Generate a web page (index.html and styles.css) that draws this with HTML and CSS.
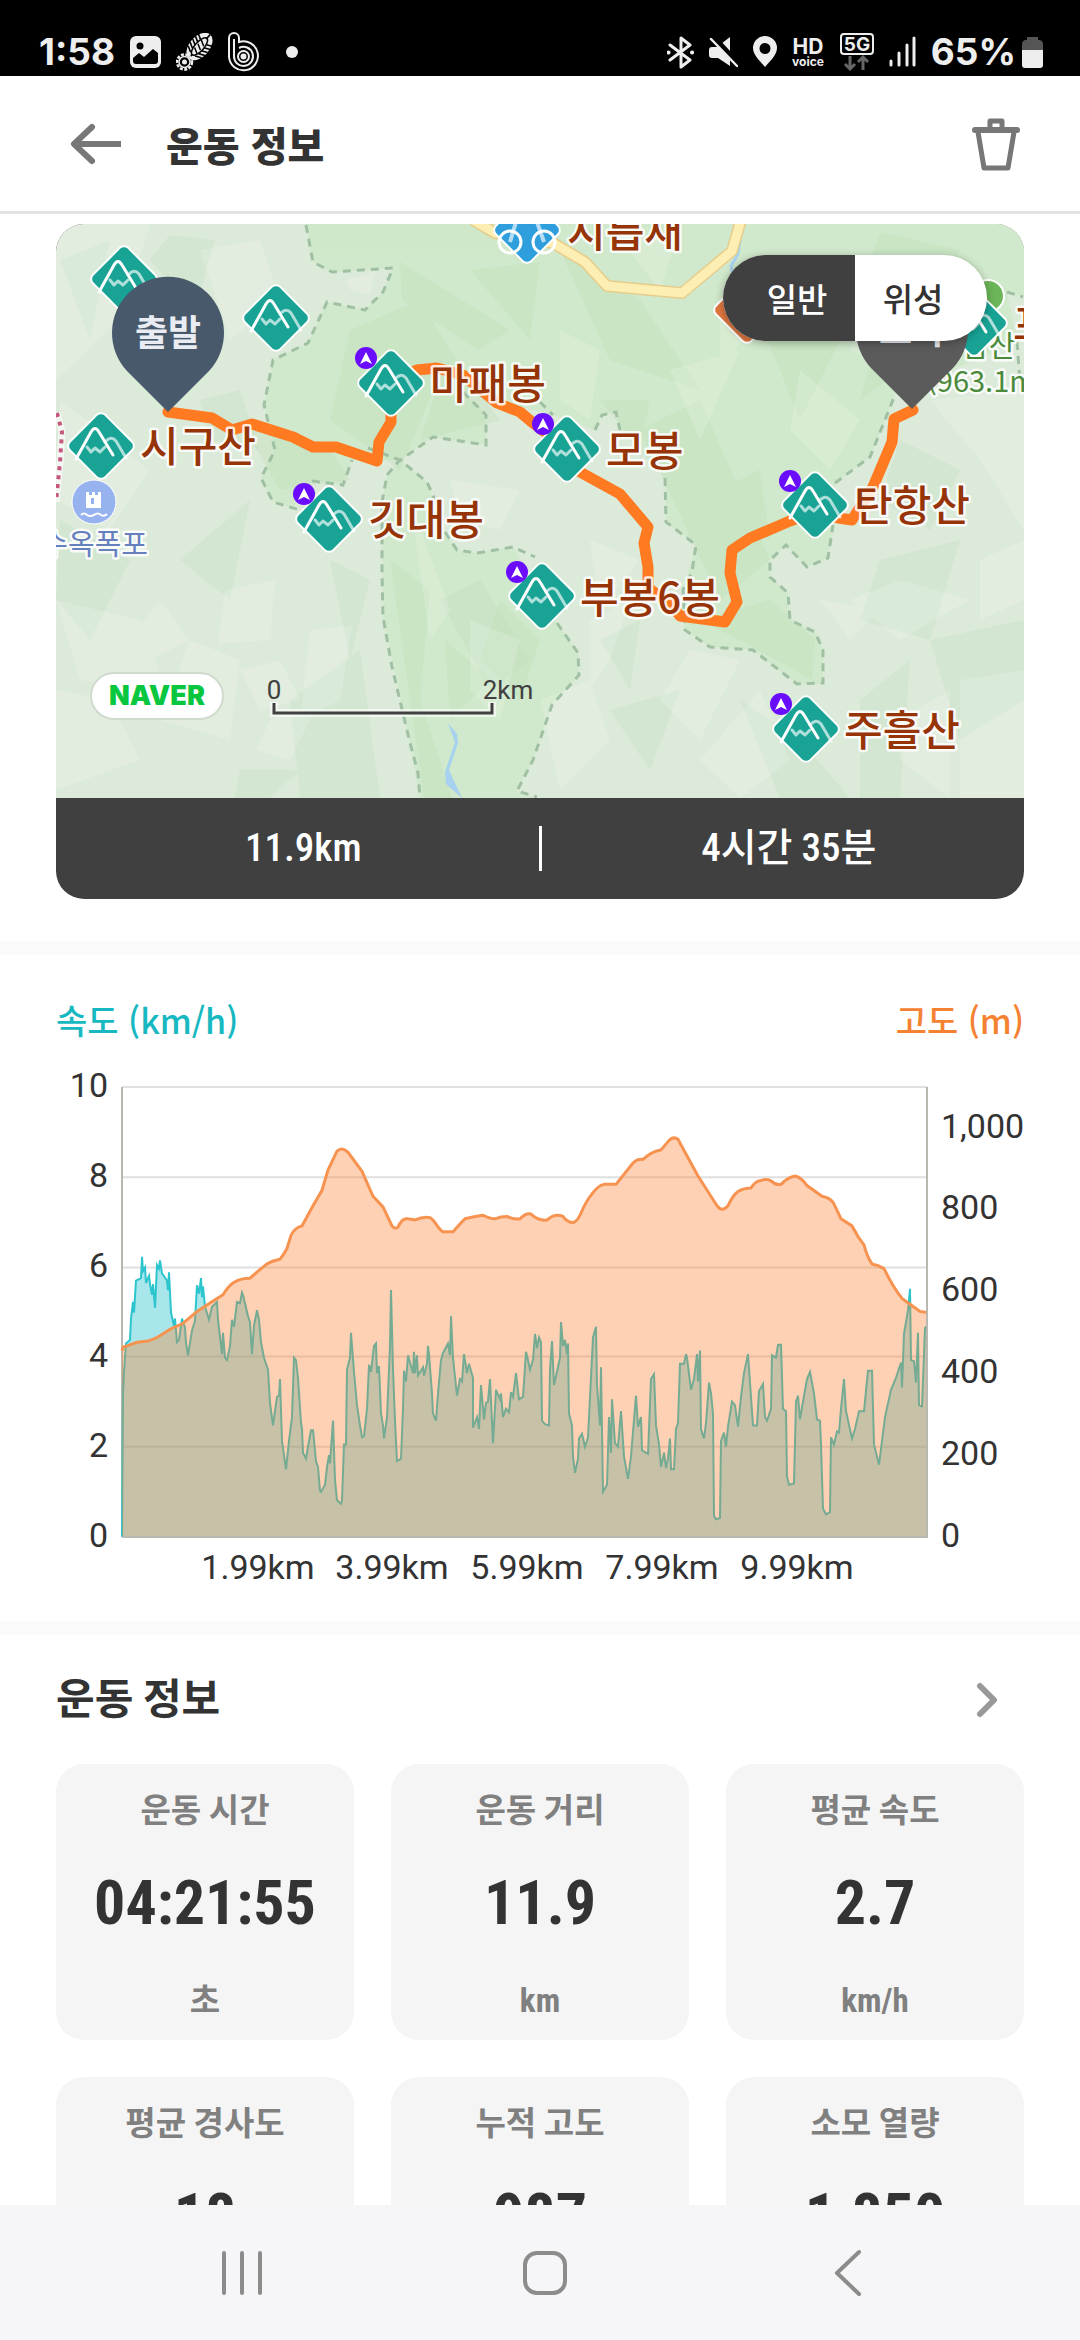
FILE: index.html
```html
<!DOCTYPE html>
<html lang="ko">
	<head>
		<meta charset="utf-8">
		<meta name="viewport" content="width=device-width, initial-scale=1">
		<title>운동 정보</title>
		<link rel="stylesheet" href="styles.css">
	</head>
	<body>
		<div class="statusbar">
			<div class="status-group">
				<span class="status-text">1:58</span>
				<svg width="31" height="32" viewBox="0 0 31 32">
					<rect width="31" height="32" rx="6" fill="#eee"/>
					<circle cx="10" cy="10" r="3.5" fill="#000"/>
					<path d="M3 22L9 17L14 21L23 13L28 17V25Q28 28 25 28H6Q3 28 3 25Z" fill="#000"/>
				</svg>
				<svg width="37" height="38" viewBox="0 0 37 38">
					<g transform="translate(23.500 13.500) rotate(42)">
						<ellipse rx="10" ry="16" fill="#eee"/>
						<path d="M-10 -9L-4 -6M-10 -5L-4 -2M-10 -1L-4 2M-10 3L-4 6M-9 7L-3 10M10 -9L4 -6M10 -5L4 -2M10 -1L4 2M10 3L4 6M9 7L3 10M0 -16V-10M0 16V11" stroke="#000" stroke-width="1.600"/>
						<ellipse rx="4.500" ry="11" fill="none" stroke="#000" stroke-width="1.500"/>
						<path d="M-3 -6L3 -3M-3 -1L3 2M-3 4L3 7" stroke="#000" stroke-width="1.500"/>
					</g>
					<circle cx="8.500" cy="29" r="7.500" fill="none" stroke="#eee" stroke-width="2.500" stroke-dasharray="3 1.500"/>
					<circle cx="8.500" cy="29" r="5.500" fill="none" stroke="#eee" stroke-width="1.500"/>
					<circle cx="8.500" cy="29" r="2.500" fill="#eee"/>
				</svg>
				<svg width="31" height="40" viewBox="0 0 31 40" fill="none" stroke="#eee" stroke-width="2">
					<path d="M1 25V6A5 5 0 0 1 11 6V10A14.500 14.500 0 1 1 1 25Z"/>
					<path d="M6 25V7M6 24A9.500 9.500 0 1 0 11 16" />
					<circle cx="15.500" cy="24.500" r="5.500"/>
					<circle cx="15.500" cy="24.500" r="2" fill="#eee"/>
				</svg>
				<span class="status-dot"></span>
			</div>
			<div class="status-group">
				<svg width="27" height="33" viewBox="0 0 27 33" fill="none" stroke="#eee" stroke-width="3" stroke-linecap="round" stroke-linejoin="round">
					<path d="M3 9L23 24L14 31V2L23 9L3 24"/>
					<path d="M1.500 16.500H1.600M25 16.500H25.100" stroke-width="4"/>
				</svg>
				<svg width="29" height="32" viewBox="0 0 29 32">
					<path d="M0 14Q0 11 3 11H8L21 1V30L9 22H3Q0 22 0 19Z" fill="#eee"/>
					<path d="M3 0L29 28" stroke="#000" stroke-width="6"/>
					<path d="M2 3L28 30" stroke="#eee" stroke-width="2.500" stroke-linecap="round"/>
				</svg>
				<svg width="24" height="32" viewBox="0 0 24 32">
					<path d="M12 0A12 12 0 0 1 24 12C24 19 17 25 12 31C7 25 0 19 0 12A12 12 0 0 1 12 0ZM12 7A5.500 5.500 0 1 0 12 18A5.500 5.500 0 1 0 12 7Z" fill="#eee" fill-rule="evenodd"/>
				</svg>
				<svg class="badge-text" width="33" height="32" viewBox="0 0 33 32">
					<text x="16" y="18" font-size="21">HD</text>
					<text x="16" y="30" font-size="12">voice</text>
				</svg>
				<svg class="badge-text" width="34" height="38" viewBox="0 0 34 38">
					<rect x="1" y="1" width="32" height="20" rx="3" fill="none" stroke="#eee" stroke-width="2"/>
					<text x="17" y="18" font-size="19">5G</text>
					<path d="M10 23V36M5 31L10 36L15 31M23 37V24M18 29L23 24L28 29" fill="none" stroke="#666" stroke-width="3"/>
				</svg>
				<svg width="27" height="32" viewBox="0 0 27 32" stroke="#eee" stroke-width="3" stroke-linecap="round">
					<path d="M2 25V29M10 17V29M18 9V29M25 2V29"/>
				</svg>
				<span class="battery">
					<span class="status-text">65%</span>
					<svg width="21" height="32" viewBox="0 0 21 32">
						<path d="M5 1H16V4H18Q21 5 21 8V15H0V8Q0 5 3 4H5Z" fill="#555"/>
						<path d="M0 14H21V29Q21 32 18 32H3Q0 32 0 29Z" fill="#eee"/>
					</svg>
				</span>
			</div>
		</div>

		<header class="appbar">
			<button class="icon-button" aria-label="뒤로">
				<svg width="52" height="42" viewBox="0 0 52 42" fill="none" stroke="#777" stroke-width="6">
					<path d="M22 4L4 21L22 38" stroke-linecap="round" stroke-linejoin="round"/>
					<path d="M4 21H51"/>
				</svg>
			</button>
			<h1 class="title">운동 정보</h1>
			<button class="icon-button" aria-label="삭제">
				<svg width="50" height="56" viewBox="0 0 50 56" fill="none" stroke="#777" stroke-width="5" stroke-linejoin="round">
					<path d="M4 14H46" stroke-width="6" stroke-linecap="round"/>
					<path d="M19 12V5H31V12"/>
					<path d="M7 16L13 52H37L43 16"/>
				</svg>
			</button>
		</header>

		<main class="content">
			<section class="section map-section">
				<div class="map-card">
					<div class="map">
						<svg class="map-canvas" viewBox="56 224 968 574">
							<defs>
								<g id="peak">
									<rect x="-25" y="-25" width="50" height="50" rx="6" transform="rotate(45)" fill="#18a395" stroke="#fff" stroke-width="2"/>
									<g fill="none" stroke="#fff" stroke-width="3" stroke-linecap="round" stroke-linejoin="round">
										<path d="M4 -4Q10 -11 15 -5L25 12M-14 1L-10 6L-6 2L-1 6L4 1" opacity=".65"/>
										<path d="M-25 13L-10 -14Q-6 -21 -2 -14L12 9"/>
									</g>
								</g>
								<g id="badge">
									<circle r="11" fill="#6a0dff"/>
									<path d="M0 -6L6 6L0 3L-6 6Z" fill="#fff"/>
								</g>
							</defs>
							<rect x="56" y="224" width="968" height="574" fill="#dcead9"/>

							<!-- park areas -->
							<path fill="#d0e8cb" d="M306 224L313 262L332 272L393 268L383 292L365 310L327 302L308 343L273 360L264 405L275 450L261 478L273 502L293 508L312 481L343 485L352 460L400 460L433 437L486 445L486 415L463 392L553 415L595 430L602 415L616 412L620 430L665 478L666 522L696 545L683 590L685 630L710 647L753 650L797 684H823V650L815 632L790 620L788 593L770 577V560L786 545L807 567L828 558L833 525L835 483L870 457L895 395L928 380L1017 342L1007 292L1024 297V224Z"/>
							<path fill="#d0e8cb" d="M400 460L427 482L445 532L457 550L477 553L513 547L557 623L578 653L579 675L552 705L533 760L517 791L537 798H420L410 743L383 617L382 502L387 475Z"/>

							<!-- relief shading -->
							<g fill="#b5dcae" opacity=".24">
								<path d="M400 262L510 330L478 350L402 300ZM350 330L420 300L450 350L400 470L330 420ZM560 250L640 300L700 390L610 360ZM640 430L700 400L770 560L720 600ZM880 232L960 250L935 300L870 262ZM700 620L770 600L815 640L812 680L740 640ZM390 560L430 590L420 700L452 798H424ZM500 600L540 640L520 700L480 660Z"/>
								<path d="M470 270L540 262L530 340ZM450 350L500 420L420 440ZM600 400L650 400L640 450ZM760 320L840 340L800 420ZM880 330L930 350L860 400ZM700 500L760 470L770 540ZM240 420L330 450L350 480L280 490ZM445 640L490 680L450 720Z"/>
							</g>
							<g fill="#bfdcc0" opacity=".28">
								<path d="M170 235L215 240L195 310L150 260ZM60 520L130 560L90 640L56 600ZM180 560L250 500L230 600ZM290 700L360 650L380 798H300ZM880 560L960 540L930 640L860 620ZM930 640L1024 620V700L960 740ZM740 700L800 740L850 798H780ZM600 640L640 620L630 690ZM900 440L960 470L930 530L880 500ZM240 770L300 770L270 798H235ZM60 260L110 240L90 340ZM440 600L480 580L530 660L490 690ZM330 560L370 580L350 660ZM610 710L680 690L650 770ZM200 400L240 390L260 450L210 440ZM860 700L910 660L900 798H860Z"/>
							</g>
							<g fill="#fff" opacity=".17">
								<path d="M56 224H150L120 320L56 380ZM200 250L260 240L280 300L230 340ZM60 400L150 470L110 530L56 500ZM56 600L140 620L170 700L80 680ZM225 590L275 580L270 640L218 644ZM190 640L240 660L230 740L160 720ZM270 720L320 700L290 760L256 750ZM310 630L352 626L340 700L300 720ZM56 690L110 700L140 760L56 790ZM120 650L160 600L190 640L150 660ZM240 670L280 660L300 700L260 710ZM345 280L375 272L370 295L350 290Z"/>
								<path d="M930 400L1024 390V530L980 460ZM900 580L970 600L900 640L850 600ZM960 680L1024 670V798H960ZM690 650L740 660L700 740L660 700ZM590 620L630 600L610 660L590 690ZM820 600L880 610L850 640ZM540 700L590 680L610 740L560 790ZM760 690L790 760L740 798L700 760ZM900 720L950 690L950 798L900 760ZM980 560L1024 540V600L980 620ZM590 540L640 560L600 610ZM450 480L520 490L500 530L460 520Z"/>
								<path d="M560 330L600 350L590 420L560 400ZM670 370L740 350L700 440ZM800 370L860 420L830 470L790 430ZM410 500L450 610L430 640ZM720 300L750 330L720 370ZM470 620L520 640L500 720L470 690ZM620 240L680 230L660 290ZM870 300L900 320L890 370L850 350Z"/>
							</g>

							<!-- park boundaries -->
							<path class="boundary" d="M306 225L313 262L332 272L393 268L383 292L365 310L327 302L308 343L273 360L264 405L275 450L261 478L273 502L300 510M312 481L343 485L352 460M368 448L400 460L427 482L435 500M463 392L486 415V445L433 437L398 462L387 475L382 502V573L383 617L392 667L410 743L418 773L420 798M445 532L457 550L477 553L513 547L535 557M557 623L578 653L579 675L552 705L533 760L517 791L537 797M540 402L553 415M595 430L602 415L616 412L620 430M665 478L666 522L696 545L692 572L683 590L685 630L710 647L753 650L797 684L823 683V650L815 632L790 620L788 593L770 577V560L786 545L807 567L828 558L833 525M835 483L870 457L895 395M1007 292L1023 297M1017 342L1020 382"/>
							<path d="M57 413L62 432L60 462L56 502" fill="none" stroke="#fff" stroke-width="7" opacity=".6"/>
							<path d="M57 413L62 432L60 462L56 502" fill="none" stroke="#c6577f" stroke-width="4" stroke-dasharray="4 5"/>

							<!-- rivers and road -->
							<path d="M448 723L457 734L458 743L449 770L462 798L446 784L445 772L455 742Z" fill="#a6d2f0"/>
							<path d="M740 240L738 254L731 266L734 278" fill="none" stroke="#a6d2f0" stroke-width="3"/>
							<g fill="none" stroke-linejoin="round">
								<path d="M473 220L495 233L553 243L585 262L607 286L682 293L732 251L741 220" stroke="#e6cd8b" stroke-width="12"/>
								<path d="M473 220L495 233L553 243L585 262L607 286L682 293L732 251L741 220" stroke="#fdeeb3" stroke-width="9"/>
							</g>

							<!-- recorded track -->
							<path d="M168 412L212 418L232 430L252 424L293 437L313 447H336L377 461L379 442L391 422V383L417 370L437 368L463 375L497 403L520 412L533 423L567 449L580 472L620 494L648 527L644 543L648 567V588L670 603L680 616L725 622L737 602L730 573L732 550L750 538L790 521L815 512L838 518L852 520L873 487L892 442L894 419L913 410" fill="none" stroke="#ff7a21" stroke-width="11" stroke-linecap="round" stroke-linejoin="round"/>

							<!-- places -->
							<circle cx="988" cy="296" r="16" fill="#6cb558" stroke="#fff" stroke-width="2"/>
							<g transform="translate(747 310)">
								<rect x="-25" y="-25" width="50" height="50" rx="6" transform="rotate(45)" fill="#e0763f" stroke="#fff" stroke-width="2"/>
							</g>
							<g transform="translate(527 230)" fill="none" stroke="#fff">
								<rect x="-25" y="-25" width="50" height="50" rx="6" transform="rotate(45)" fill="#2e9fdc" stroke-width="2"/>
								<circle cx="-17" cy="12" r="11" stroke-width="3"/>
								<circle cx="17" cy="12" r="11" stroke-width="3"/>
								<path d="M-17 12L-11 -8H10L17 12" stroke-width="4" opacity=".65"/>
							</g>
							<g class="park-name">
								<text x="962" y="357">남산</text>
								<text x="927" y="392">(963.1m)</text>
							</g>
							<use href="#peak" x="124" y="279"/>
							<use href="#peak" x="276" y="318"/>
							<use href="#peak" x="391" y="383"/>
							<use href="#peak" x="101" y="446"/>
							<use href="#peak" x="329" y="519"/>
							<use href="#peak" x="567" y="449"/>
							<use href="#peak" x="815" y="505"/>
							<use href="#peak" x="542" y="596"/>
							<use href="#peak" x="806" y="729"/>
							<use href="#peak" x="974" y="323"/>
							<use href="#badge" x="366" y="358"/>
							<use href="#badge" x="304" y="494"/>
							<use href="#badge" x="543" y="424"/>
							<use href="#badge" x="790" y="481"/>
							<use href="#badge" x="517" y="572"/>
							<use href="#badge" x="781" y="704"/>
							<g class="peak-name">
								<text x="567" y="247">지릅재</text>
								<text x="430" y="399">마패봉</text>
								<text x="140" y="462">시구산</text>
								<text x="368" y="535">깃대봉</text>
								<text x="606" y="466">모봉</text>
								<text x="854" y="521">탄항산</text>
								<text x="580" y="613">부봉6봉</text>
								<text x="844" y="746">주흘산</text>
								<text x="1013" y="340">포암산</text>
							</g>
							<circle cx="94" cy="502" r="22" fill="#96b3f0" stroke="#fff" stroke-width="1"/>
							<path d="M86 492H89V495H92V492H95V495H98V492H101V508H86ZM91 498V504H94V498Z" fill="#fff" fill-rule="evenodd"/>
							<path d="M81 515Q84 512 87 515Q90 517 94 515Q98 512 101 515Q104 517 107 514" fill="none" stroke="#fff" stroke-width="2"/>
							<text class="fall-name" x="148" y="555">수옥폭포</text>

							<!-- start and finish pins -->
							<path d="M168 412L127 371A56 56 0 1 1 209 371Z" fill="#47596b"/>
							<text class="pin-name" x="168" y="346">출발</text>
							<path d="M912 409L871 368A56 56 0 1 1 953 368Z" fill="#5b5b5b"/>
							<text class="pin-name" x="912" y="344">도착</text>

							<!-- scale bar -->
							<path d="M274 702V713H492V702" fill="none" stroke="#fff" stroke-opacity=".6" stroke-width="8"/>
							<path d="M274 703V713H492V703" fill="none" stroke="#404040" stroke-width="3"/>
							<text class="scale-text" x="274" y="699">0</text>
							<text class="scale-text" x="508" y="699">2km</text>
						</svg>
						<div class="map-type">
							<button class="map-type-button active" aria-pressed="true">일반</button>
							<button class="map-type-button" aria-pressed="false">위성</button>
						</div>
						<a class="naver" href="#">NAVER</a>
					</div>
					<div class="map-summary">
						<span class="summary-value">11.9km</span>
						<span class="summary-value">4시간 35분</span>
					</div>
				</div>
			</section>

			<section class="section chart-section">
				<div class="chart-head">
					<h2 class="chart-title speed">속도 (km/h)</h2>
					<h2 class="chart-title altitude">고도 (m)</h2>
				</div>
				<svg class="chart" viewBox="56 1050 968 540">
					<!-- plot area, stretched over the axes -->
					<svg class="plot" x="122" y="1087" width="805" height="450" viewBox="122 1072 805 379" preserveAspectRatio="none">
						<path class="grid" d="M122 1072H927M122 1148H927M122 1224H927M122 1299H927M122 1375H927"/>
						<path class="border" d="M122 1072V1451"/>
						<path class="speed-area" d="M122 1451L123 1330L124 1312L126 1288L130 1285L131 1267L133 1253L134 1262L136 1235L141 1233L142 1215L143 1227L145 1224L146 1237L149 1231L150 1238L152 1247L153 1238L155 1258L157 1222L159 1225L160 1218L162 1229L167 1235L168 1243L169 1228L171 1262L174 1273L175 1267L177 1287L179 1285L182 1267L185 1275L186 1287L188 1298L192 1277L195 1269L197 1239L199 1246L201 1233L202 1249L203 1240L205 1257L209 1268L212 1257L217 1253L218 1268L222 1297L223 1279L225 1300L227 1302L230 1290L232 1268L234 1274L237 1253L240 1254L242 1245L243 1247L248 1265L250 1270L252 1297L254 1273L257 1260L259 1268L261 1287L264 1300L268 1310L270 1338L273 1357L277 1333L279 1332L280 1318L282 1370L286 1394L289 1370L292 1350L294 1300L296 1302L298 1317L301 1355L302 1360L303 1380L306 1385L308 1375L311 1361H313L316 1387L318 1392L320 1412L321 1413L325 1407L327 1392L329 1382L330 1389L333 1353L335 1403L337 1420L341 1423L342 1420L344 1373H346L347 1310L350 1300L351 1279L354 1312L357 1340L360 1357L362 1367L364 1366L367 1343L369 1306L371 1312L374 1290L376 1288L377 1313L379 1307L381 1347L383 1357L384 1368L387 1350L390 1290L391 1243L393 1310L395 1353L397 1387L401 1385L403 1343L404 1311L406 1320L408 1298L411 1307L413 1313L414 1295L415 1313L417 1298L418 1315L423 1308L424 1315L427 1305L428 1290L429 1297L432 1330L433 1347L436 1353L438 1330L441 1302L443 1296L448 1288L450 1298L451 1265L453 1300L457 1332L460 1318L462 1320L464 1297L467 1313L469 1305L473 1317L473 1359L477 1350L479 1360L481 1323L484 1352L486 1338L488 1337L490 1318L493 1372L496 1327L500 1335L501 1330L503 1350L506 1343L509 1346L511 1329L513 1333L516 1313L519 1335L523 1333L526 1295L528 1302L530 1310L533 1302L535 1280L537 1292L539 1283L541 1287L542 1353L545 1356L549 1357L550 1310L552 1286L554 1323L558 1308L560 1300L561 1270L563 1290L565 1285L567 1297L568 1288L569 1347L572 1357L573 1383L575 1397L578 1385L579 1368L582 1364L585 1375L588 1367L591 1317L593 1283L596 1274L597 1323L600 1357L601 1308L603 1413L607 1407L609 1350L611 1380L612 1335L615 1372L618 1375L621 1345L624 1383L628 1402L631 1383L636 1332L638 1358L641 1350L642 1378L648 1381L651 1318L654 1314L656 1357L659 1373L661 1392L664 1380L666 1393L668 1385L670 1368L671 1394H674L676 1360L678 1355L680 1305H684L686 1297L687 1300L691 1327L694 1318L697 1297L698 1320L700 1294L701 1360L704 1368L706 1355L709 1321L711 1330L713 1347L714 1433L716 1436L720 1435L721 1370L724 1363L726 1375L728 1358L732 1337L735 1340L738 1358L741 1333L744 1313L748 1297L751 1333L753 1357H757L759 1328L763 1322L765 1350L767 1353L771 1343L772 1298L776 1300L778 1289H781L783 1343L786 1345L787 1400L789 1407L794 1406L796 1337L798 1332L800 1352L803 1337L807 1318L810 1312L814 1330L817 1352L820 1353L821 1373L823 1427L826 1432L830 1430L831 1367L834 1373L837 1362L839 1363L841 1343L844 1318L846 1345L852 1368L855 1360L859 1345H864L866 1328L868 1311H872L874 1373L879 1390L882 1370L885 1350L891 1327L896 1317L901 1304L902 1325L904 1280L908 1260L910 1242L911 1302L914 1303L916 1321L918 1279L919 1340L922 1341L925 1275L927 1273V1451"/>
						<path class="altitude-area" d="M122 1451V1292L127 1290L137 1287L148 1286L157 1283L170 1276L183 1271L197 1261L210 1254L223 1247Q228 1240 233 1237Q240 1233 250 1233Q258 1227 267 1221Q273 1218 280 1217Q284 1213 287 1208L291 1197Q294 1191 302 1189L313 1172L322 1159L328 1142L337 1126Q342 1122 348 1127L362 1143L373 1164L383 1173L392 1189Q395 1192 398 1190Q402 1182 408 1183L415 1184Q423 1181 430 1182C435 1184 437 1191 443 1194H453Q460 1187 465 1183Q474 1181 483 1180Q490 1183 495 1183Q501 1181 507 1181Q514 1184 520 1183Q526 1178 531 1179Q539 1185 547 1184Q555 1178 563 1181Q568 1187 574 1186Q578 1184 580 1180Q586 1168 592 1162Q598 1155 604 1154H616L633 1136Q638 1132 643 1133Q652 1126 661 1125L668 1118Q673 1113 678 1116L685 1127L698 1147L717 1172Q722 1178 728 1172Q733 1163 738 1160Q744 1157 751 1157Q756 1151 760 1151Q766 1149 771 1151Q776 1155 781 1154Q788 1148 795 1147Q801 1148 807 1155L822 1164Q829 1165 833 1169Q836 1174 841 1183L852 1189L858 1198L864 1205Q867 1215 872 1221Q878 1222 884 1225Q894 1242 902 1250L910 1255L920 1261L927 1262V1451Z"/>
						<path class="altitude-line" d="M122 1294L123 1291L127 1290L137 1287L148 1286L157 1283L170 1276L183 1271L197 1261L210 1254L223 1247Q228 1240 233 1237Q240 1233 250 1233Q258 1227 267 1221Q273 1218 280 1217Q284 1213 287 1208L291 1197Q294 1191 302 1189L313 1172L322 1159L328 1142L337 1126Q342 1122 348 1127L362 1143L373 1164L383 1173L392 1189Q395 1192 398 1190Q402 1182 408 1183L415 1184Q423 1181 430 1182C435 1184 437 1191 443 1194H453Q460 1187 465 1183Q474 1181 483 1180Q490 1183 495 1183Q501 1181 507 1181Q514 1184 520 1183Q526 1178 531 1179Q539 1185 547 1184Q555 1178 563 1181Q568 1187 574 1186Q578 1184 580 1180Q586 1168 592 1162Q598 1155 604 1154H616L633 1136Q638 1132 643 1133Q652 1126 661 1125L668 1118Q673 1113 678 1116L685 1127L698 1147L717 1172Q722 1178 728 1172Q733 1163 738 1160Q744 1157 751 1157Q756 1151 760 1151Q766 1149 771 1151Q776 1155 781 1154Q788 1148 795 1147Q801 1148 807 1155L822 1164Q829 1165 833 1169Q836 1174 841 1183L852 1189L858 1198L864 1205Q867 1215 872 1221Q878 1222 884 1225Q894 1242 902 1250L910 1255L920 1261L927 1262"/>
						<path class="border" d="M122 1451H927V1072"/>
					</svg>
					<g class="axis axis-left">
						<text x="108" y="1097">10</text>
						<text x="108" y="1187">8</text>
						<text x="108" y="1277">6</text>
						<text x="108" y="1367">4</text>
						<text x="108" y="1457">2</text>
						<text x="108" y="1547">0</text>
					</g>
					<g class="axis axis-right">
						<text x="941" y="1138">1,000</text>
						<text x="941" y="1219">800</text>
						<text x="941" y="1301">600</text>
						<text x="941" y="1383">400</text>
						<text x="941" y="1465">200</text>
						<text x="941" y="1547">0</text>
					</g>
					<g class="axis axis-bottom">
						<text x="258" y="1579">1.99km</text>
						<text x="392" y="1579">3.99km</text>
						<text x="527" y="1579">5.99km</text>
						<text x="662" y="1579">7.99km</text>
						<text x="797" y="1579">9.99km</text>
					</g>
				</svg>
			</section>

			<section class="section info-section">
				<div class="info-head">
					<h2 class="info-title">운동 정보</h2>
					<button class="icon-button" aria-label="더 보기">
						<svg width="22" height="36" viewBox="0 0 22 36" fill="none" stroke="#999" stroke-width="6" stroke-linecap="round" stroke-linejoin="round">
							<path d="M4 4L18 18L4 32"/>
						</svg>
					</button>
				</div>
				<div class="cards">
					<div class="card">
						<span class="card-label">운동 시간</span>
						<span class="card-value">04:21:55</span>
						<span class="card-label">초</span>
					</div>
					<div class="card">
						<span class="card-label">운동 거리</span>
						<span class="card-value">11.9</span>
						<span class="card-label">km</span>
					</div>
					<div class="card">
						<span class="card-label">평균 속도</span>
						<span class="card-value">2.7</span>
						<span class="card-label">km/h</span>
					</div>
					<div class="card">
						<span class="card-label">평균 경사도</span>
						<span class="card-value">18</span>
						<span class="card-label">%</span>
					</div>
					<div class="card">
						<span class="card-label">누적 고도</span>
						<span class="card-value">987</span>
						<span class="card-label">m</span>
					</div>
					<div class="card">
						<span class="card-label">소모 열량</span>
						<span class="card-value">1,850</span>
						<span class="card-label">kcal</span>
					</div>
				</div>
			</section>
		</main>

		<nav class="navbar">
			<button class="nav-button" aria-label="최근 앱">
				<svg width="42" height="46" viewBox="0 0 42 46" fill="none" stroke="#8c8c8c" stroke-width="4" stroke-linecap="round">
					<path d="M3 3V43M21 3V43M39 3V43"/>
				</svg>
			</button>
			<button class="nav-button" aria-label="홈">
				<svg width="46" height="46" viewBox="0 0 46 46" fill="none" stroke="#8c8c8c" stroke-width="4">
					<rect x="3" y="3" width="40" height="40" rx="12"/>
				</svg>
			</button>
			<button class="nav-button" aria-label="뒤로 가기">
				<svg width="28" height="48" viewBox="0 0 28 48" fill="none" stroke="#8c8c8c" stroke-width="4" stroke-linecap="round" stroke-linejoin="round">
					<path d="M25 3L3 24L25 45"/>
				</svg>
			</button>
		</nav>
	</body>
</html>
```
FILE: styles.css
```css
*
{
	box-sizing: border-box;
}
body
{
	margin: 0;
	height: 100vh;
	display: flex;
	flex-direction: column;
	background-color: #fff;
	color: #333;
	font-family: "Roboto Condensed", "Noto Sans CJK KR", sans-serif;
}
h1, h2
{
	margin: 0;
}
button
{
	border: 0;
	padding: 0;
	background: none;
	color: inherit;
	font-family: inherit;
}
svg
{
	display: block;
	flex: none;
}

/* status bar */
.statusbar
{
	flex: none;
	display: flex;
	justify-content: space-between;
	align-items: center;
	height: 76px;
	padding: 28px 37px 0 39px;
	background-color: #000;
}
.status-group, .battery
{
	display: flex;
	align-items: center;
	gap: 15px;
}
.battery
{
	gap: 6px;
}
.status-text
{
	color: #eee;
	font-family: Inter, sans-serif;
	font-size: 37px;
	line-height: 48px;
	font-weight: 700;
}
.status-dot
{
	width: 12px;
	height: 12px;
	margin-left: 12px;
	border-radius: 50%;
	background-color: #eee;
}
.badge-text text
{
	fill: #eee;
	font-family: Inter, sans-serif;
	font-weight: 700;
	text-anchor: middle;
}

/* app bar */
.appbar
{
	flex: none;
	display: flex;
	align-items: center;
	height: 138px;
	padding: 0 59px 0 70px;
	border-bottom: 3px solid #e2e2e2;
}
.title
{
	flex: 1;
	margin-left: 44px;
	font-family: "Noto Sans CJK KR", sans-serif;
	font-size: 40px;
	line-height: 56px;
	font-weight: 900;
}

.content
{
	flex: 1;
	min-height: 0;
	overflow-y: auto;
	scrollbar-width: none;
}
.section
{
	padding: 40px 56px;
	border-bottom: 14px solid #fafafa;
}

/* map */
.map-section
{
	padding-top: 10px;
	padding-bottom: 42px;
}
.map-card
{
	overflow: hidden;
	border-radius: 28px;
	background-color: #404040;
}
.map
{
	position: relative;
}
.map-canvas
{
	width: 100%;
	height: auto;
	font-family: "Noto Sans CJK KR", sans-serif;
}
.boundary
{
	fill: none;
	stroke: #a0c0a4;
	stroke-width: 3;
	stroke-dasharray: 8 6;
}
.peak-name, .park-name, .fall-name
{
	stroke: #fff;
	stroke-width: 5px;
	stroke-opacity: .85;
	stroke-linejoin: round;
	paint-order: stroke;
}
.peak-name
{
	fill: #963408;
	font-size: 42px;
	font-weight: 500;
}
.park-name
{
	fill: #4a8a3a;
	font-size: 29px;
}
.fall-name
{
	fill: #6580bd;
	font-size: 29px;
	text-anchor: end;
}
.pin-name
{
	fill: #e9ecf2;
	font-size: 36px;
	font-weight: 700;
	text-anchor: middle;
}
.scale-text
{
	fill: #404040;
	font-family: Roboto, sans-serif;
	font-size: 26px;
	text-anchor: middle;
}
.map-type
{
	position: absolute;
	top: 31px;
	right: 37px;
	display: flex;
	overflow: hidden;
	border-radius: 44px;
	background-color: #fff;
	box-shadow: 0 2px 8px rgba(0, 0, 0, .3);
}
.map-type-button
{
	width: 132px;
	height: 86px;
	font-family: "Noto Sans CJK KR", sans-serif;
	font-size: 33px;
	font-weight: 500;
}
.map-type-button.active
{
	background-color: #404040;
	color: #fff;
}
.map-type-button:first-child
{
	padding-left: 16px;
}
.map-type-button:last-child
{
	padding-right: 16px;
}
.naver
{
	position: absolute;
	left: 34px;
	bottom: 78px;
	padding: 0 17px;
	border: 2px solid #cfdccd;
	border-radius: 24px;
	background-color: #fff;
	color: #08c73f;
	font-family: Inter, sans-serif;
	font-size: 27px;
	line-height: 44px;
	font-weight: 900;
	text-decoration: none;
}
.map-summary
{
	display: flex;
	align-items: center;
	height: 101px;
	color: #fff;
	font-size: 39px;
	font-weight: 500;
}
.summary-value
{
	flex: 1;
	padding-left: 12px;
	line-height: 45px;
	text-align: center;
}
.summary-value + .summary-value
{
	border-left: 3px solid #fff;
}

/* speed and altitude chart */
.chart-section
{
	padding-top: 44px;
	padding-bottom: 31px;
}
.chart-head
{
	display: flex;
	justify-content: space-between;
}
.chart-title
{
	font-family: "Noto Sans CJK KR", sans-serif;
	font-size: 34px;
	line-height: 42px;
	font-weight: 500;
}
.speed
{
	color: #17b8c1;
}
.altitude
{
	color: #f58232;
}
.chart
{
	width: 100%;
	height: auto;
	margin-top: 9px;
}
.plot
{
	overflow: visible;
}
.plot path
{
	vector-effect: non-scaling-stroke;
}
.grid
{
	fill: none;
	stroke: #e0e0e0;
	stroke-width: 2;
}
.border
{
	fill: none;
	stroke: #b8b8b0;
	stroke-width: 2;
}
.speed-area
{
	fill: rgba(28, 190, 205, .38);
	stroke: #2cc5cd;
	stroke-width: 2;
}
.altitude-area
{
	fill: #ff7a28;
	fill-opacity: .35;
}
.altitude-line
{
	fill: none;
	stroke: #f79350;
	stroke-width: 3;
}
.axis
{
	fill: #333;
	font-family: Roboto, sans-serif;
	font-size: 34px;
}
.axis-left
{
	text-anchor: end;
}
.axis-bottom
{
	text-anchor: middle;
}

/* workout info */
.info-section
{
	border-bottom: 0;
}
.info-head
{
	display: flex;
	justify-content: space-between;
	align-items: center;
	padding-right: 26px;
	margin-bottom: 39px;
}
.info-title
{
	font-size: 42px;
	line-height: 50px;
	font-weight: 700;
}
.cards
{
	display: grid;
	grid-template-columns: repeat(3, 1fr);
	gap: 37px;
}
.card
{
	display: flex;
	flex-direction: column;
	align-items: center;
	padding: 27px 0 19px;
	border-radius: 28px;
	background-color: #f5f5f5;
}
.card-label
{
	color: #808080;
	font-size: 33px;
	line-height: 40px;
	font-weight: 700;
}
.card-value
{
	margin: 37px 0 43px;
	font-size: 62px;
	line-height: 70px;
	font-weight: 700;
}

/* system navigation */
.navbar
{
	flex: none;
	display: grid;
	grid-template-columns: repeat(3, 1fr);
	height: 135px;
	padding: 0 81px 0 91px;
	background-color: #f6f6f8;
}
.nav-button
{
	display: flex;
	justify-content: center;
	align-items: center;
}
```
